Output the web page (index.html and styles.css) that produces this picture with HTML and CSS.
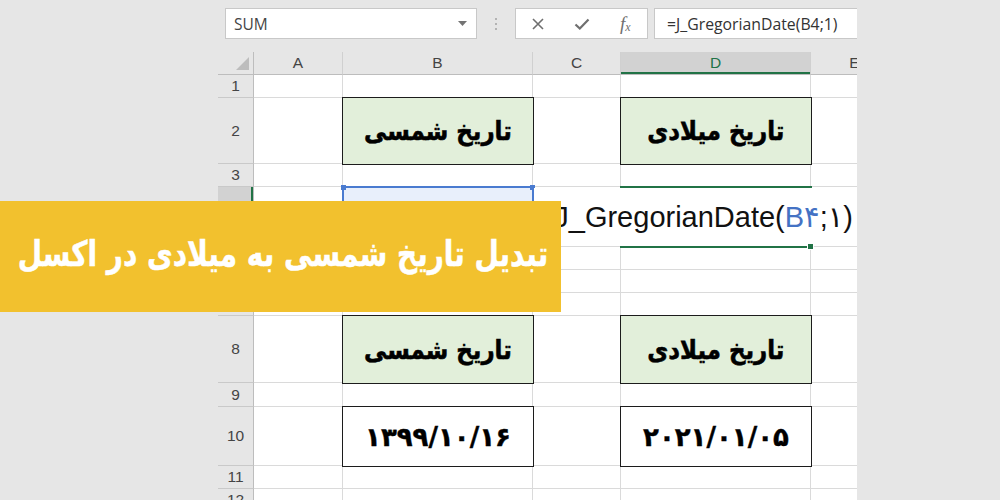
FILE: index.html
```html
<!DOCTYPE html>
<html lang="fa">
<head>
<meta charset="utf-8">
<title>تبدیل تاریخ شمسی به میلادی در اکسل</title>
<link rel="stylesheet" href="styles.css">
</head>
<body>
<div class="app">
  <div class="fbar">
    <div class="namebox">
      <span>SUM</span>
      <svg class="caret" width="9" height="5" viewBox="0 0 9 5"><path d="M0 0H9L4.5 5Z" fill="#737373"/></svg>
    </div>
    <div class="dots"><i></i><i></i><i></i></div>
    <div class="btns">
      <div class="b"><svg width="12" height="12" viewBox="0 0 12 12"><path d="M1 1L11 11M11 1L1 11" stroke="#6f6f6f" stroke-width="1.6" fill="none"/></svg></div>
      <div class="b"><svg width="16" height="12" viewBox="0 0 16 12"><path d="M1.5 6.5L5.8 10.5L14.5 1.5" stroke="#6f6f6f" stroke-width="2.2" fill="none"/></svg></div>
      <div class="b"><span class="fx">f<sub>x</sub></span></div>
    </div>
    <div class="formula">=J_GregorianDate(B4;1)</div>
  </div>

  <div class="sheet">
    <!-- header -->
    <div class="corner"><svg width="14" height="13" viewBox="0 0 14 13"><path d="M13 0V13H0Z" fill="#bdbdbd"/></svg></div>
    <div class="ch">A</div><div class="ch">B</div><div class="ch">C</div><div class="ch selcol">D</div><div class="ch">E</div>
    <!-- 1 -->
    <div class="rh">1</div><div class="c"></div><div class="c"></div><div class="c"></div><div class="c"></div><div class="c"></div>
    <!-- 2 -->
    <div class="rh">2</div><div class="c"></div>
    <div class="c box green"><span class="title">تاریخ شمسی</span></div>
    <div class="c"></div>
    <div class="c box green"><span class="title">تاریخ میلادی</span></div>
    <div class="c"></div>
    <!-- 3 -->
    <div class="rh">3</div><div class="c"></div><div class="c"></div><div class="c"></div><div class="c"></div><div class="c"></div>
    <!-- 4 (row number hidden under the banner) -->
    <div class="rh selrow"></div><div class="c"></div>
    <div class="c ref"><span class="date" dir="ltr">۱۳۹۹/۱۰/۱۶</span></div>
    <div class="c"></div><div class="c"></div><div class="c"></div>
    <!-- 5 -->
    <div class="rh"></div><div class="c"></div><div class="c"></div><div class="c"></div><div class="c"></div><div class="c"></div>
    <!-- 6 -->
    <div class="rh"></div><div class="c"></div><div class="c"></div><div class="c"></div><div class="c"></div><div class="c"></div>
    <!-- 7 -->
    <div class="rh"></div><div class="c"></div><div class="c"></div><div class="c"></div><div class="c"></div><div class="c"></div>
    <!-- 8 -->
    <div class="rh">8</div><div class="c"></div>
    <div class="c box green"><span class="title">تاریخ شمسی</span></div>
    <div class="c"></div>
    <div class="c box green"><span class="title">تاریخ میلادی</span></div>
    <div class="c"></div>
    <!-- 9 -->
    <div class="rh">9</div><div class="c"></div><div class="c"></div><div class="c"></div><div class="c"></div><div class="c"></div>
    <!-- 10 -->
    <div class="rh">10</div><div class="c"></div>
    <div class="c box"><span class="date" dir="ltr">۱۳۹۹/۱۰/۱۶</span></div>
    <div class="c"></div>
    <div class="c box"><span class="date" dir="ltr">۲۰۲۱/۰۱/۰۵</span></div>
    <div class="c"></div>
    <!-- 11 -->
    <div class="rh">11</div><div class="c"></div><div class="c"></div><div class="c"></div><div class="c"></div><div class="c"></div>
    <!-- 12 -->
    <div class="rh">12</div><div class="c"></div><div class="c"></div><div class="c"></div><div class="c"></div><div class="c"></div>

    <div class="edit" dir="ltr">=J_GregorianDate(<span class="refc">B۴</span>;۱)</div>
    <div class="cursor"></div>
  </div>

  <div class="banner" dir="rtl"><span class="btext">تبدیل تاریخ شمسی به میلادی در اکسل</span></div>
</div>
</body>
</html>
```

FILE: styles.css
```css
html, body {
  margin: 0;
  padding: 0;
}
body {
  background: #e6e6e6;
  font-family: "Liberation Sans", Arial, sans-serif;
}
.app {
  position: relative;
  width: 1000px;
  height: 500px;
  overflow: hidden;
}

/* formula bar */
.fbar {
  display: flex;
  align-items: flex-start;
  box-sizing: border-box;
  height: 52px;
  padding: 8px 0 0 225px;
}
.namebox {
  width: 252px;
  height: 31px;
  box-sizing: border-box;
  border: 1px solid #c8c8c8;
  background: #fff;
  display: flex;
  align-items: center;
  justify-content: space-between;
  padding: 0 9px 0 8px;
  font-family: "Open Sans", "Noto Sans", sans-serif;
  font-size: 15.5px;
  color: #444;
}
.dots {
  width: 38px;
  height: 31px;
  display: flex;
  flex-direction: column;
  align-items: center;
  justify-content: center;
  gap: 3px;
}
.dots i {
  width: 2px;
  height: 2px;
  background: #b3b3b3;
}
.btns {
  width: 133px;
  height: 31px;
  box-sizing: border-box;
  border: 1px solid #c8c8c8;
  background: #fff;
  display: flex;
}
.btns .b {
  flex: 1;
  display: flex;
  align-items: center;
  justify-content: center;
}
.fx {
  font-family: "Liberation Serif", serif;
  font-style: italic;
  font-size: 19px;
  color: #6f6f6f;
  line-height: 1;
}
.fx sub {
  font-size: 12px;
  vertical-align: -1px;
}
.formula {
  margin-left: 6px;
  width: 203px;
  height: 31px;
  box-sizing: border-box;
  border: 1px solid #c8c8c8;
  border-right: none;
  background: #fff;
  padding-left: 12px;
  display: flex;
  align-items: center;
  font-family: "Open Sans", "Noto Sans", sans-serif;
  font-size: 15.8px;
  color: #333;
  white-space: nowrap;
  overflow: hidden;
}

/* sheet */
.sheet {
  position: relative;
  margin-left: 218px;
  width: 639px;
  height: 448px;
  overflow: hidden;
  background: #fff;
  display: grid;
  grid-template-columns: 36px 89px 190px 88px 190px 88px;
  grid-template-rows: 23px 23px 66px 23px 60px 23px 23px 23px 67px 24px 59px 23px 23px;
}
.corner, .ch, .rh, .c {
  box-sizing: border-box;
  display: flex;
  align-items: center;
  justify-content: center;
}
.corner {
  background: #e6e6e6;
  border-right: 1px solid #bdbdbd;
  border-bottom: 1px solid #bdbdbd;
  align-items: flex-end;
  justify-content: flex-end;
  padding: 0 3px 4px 0;
}
.ch {
  background: #e6e6e6;
  border-right: 1px solid #d0d0d0;
  border-bottom: 1px solid #bdbdbd;
  color: #444;
  font-size: 15.5px;
}
.ch.selcol {
  background: #d2d2d2;
  color: #217346;
  box-shadow: inset 0 -2px 0 #217346;
}
.rh {
  background: #e6e6e6;
  border-right: 1px solid #bdbdbd;
  border-bottom: 1px solid #c9c9c9;
  color: #444;
  font-size: 15.5px;
}
.rh.selrow {
  background: #d2d2d2;
  box-shadow: inset -2px 0 0 #217346;
}
.c {
  background: #fff;
  border-right: 1px solid #dadada;
  border-bottom: 1px solid #dadada;
}
/* bordered cells: drawn over the neighbouring gridlines */
.c.box {
  position: relative;
  margin: -1px;
  border: 1px solid #1c1c1c;
}
.c.green {
  background: #e2efda;
}
.c.ref {
  position: relative;
  margin: -1px;
  background: #e8effb;
  border: 2px solid #4a7bd0;
}
.c.ref::before,
.c.ref::after {
  content: "";
  position: absolute;
  top: -3px;
  width: 5px;
  height: 5px;
  background: #4a7bd0;
}
.c.ref::before { left: -3px; }
.c.ref::after { right: -3px; }

.title {
  font-family: "DejaVu Sans", sans-serif;
  font-weight: bold;
  font-size: 26px;
  color: #000;
  white-space: nowrap;
  display: inline-block;
  transform: scaleX(0.88);
  -webkit-text-stroke: 0.6px #000;
}
.date {
  font-family: "DejaVu Sans", sans-serif;
  font-weight: bold;
  font-size: 26px;
  color: #000;
  white-space: nowrap;
  -webkit-text-stroke: 0.4px #000;
}

/* in-cell editing overlay over row 4 */
.edit {
  position: absolute;
  left: 316px;
  top: 136px;
  width: 323px;
  height: 58px;
  background: #fff;
  z-index: 1;
  display: flex;
  align-items: center;
  justify-content: flex-end;
  box-sizing: border-box;
  padding-right: 4px;
  font-family: "Liberation Sans", Arial, "DejaVu Sans", sans-serif;
  font-size: 29px;
  color: #111;
  white-space: nowrap;
}
.refc {
  color: #4472c4;
}
.cursor {
  position: absolute;
  left: 402px;
  top: 134px;
  width: 192px;
  height: 62px;
  box-sizing: border-box;
  border-top: 2px solid #217346;
  border-bottom: 2px solid #217346;
  z-index: 2;
}
.cursor::after {
  content: "";
  position: absolute;
  right: -2px;
  bottom: -4px;
  width: 5px;
  height: 5px;
  background: #217346;
  border: 1px solid #fff;
}

/* title banner */
.banner {
  position: absolute;
  left: 0;
  top: 201px;
  width: 561px;
  height: 111px;
  z-index: 3;
  background: #f2c12e;
  display: flex;
  align-items: center;
  justify-content: center;
  color: #fff;
  font-family: "DejaVu Sans", sans-serif;
  font-weight: bold;
  font-size: 35px;
  white-space: nowrap;
}
.btext {
  display: inline-block;
  transform: scaleX(0.8);
  padding: 0 0 6px 6px;
  -webkit-text-stroke: 0.5px #fff;
}
```
